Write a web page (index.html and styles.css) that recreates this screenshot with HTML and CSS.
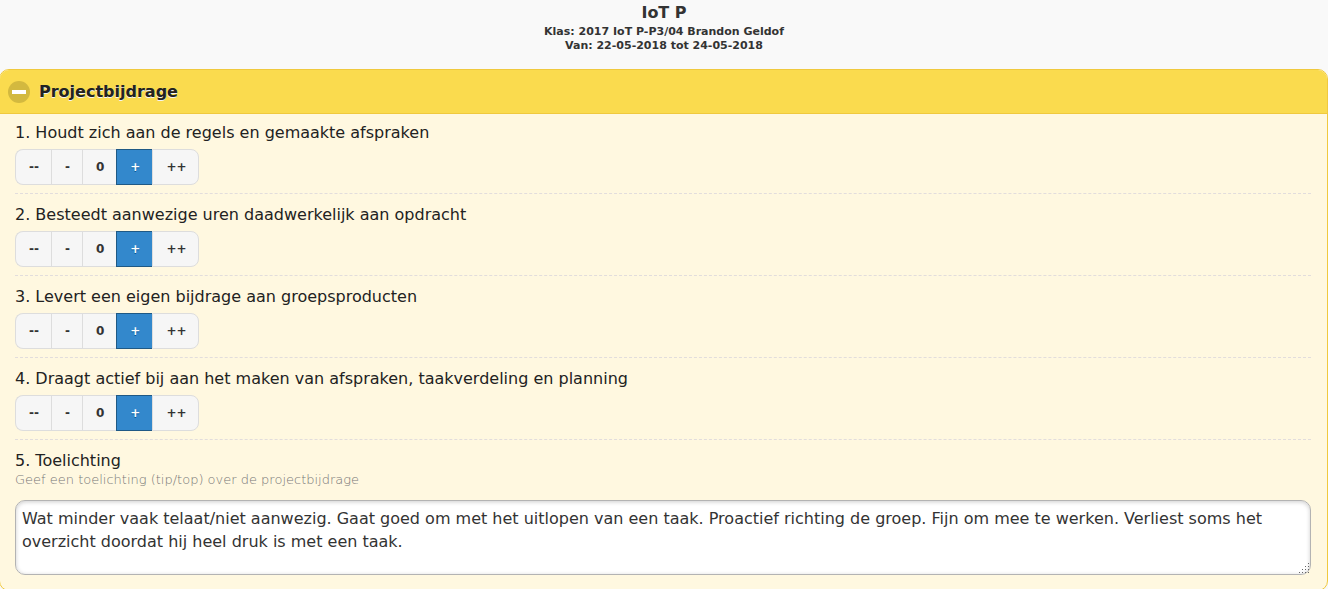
FILE: index.html
```html
<!DOCTYPE html>
<html lang="nl">
<head>
<meta charset="utf-8">
<title>IoT P</title>
<link rel="stylesheet" href="styles.css">
</head>
<body>
<header class="page-header">
  <h1 class="page-title">IoT P</h1>
  <p class="page-meta">Klas: 2017 IoT P-P3/04 Brandon Geldof</p>
  <p class="page-meta">Van: 22-05-2018 tot 24-05-2018</p>
</header>
<main class="panel">
  <h2 class="panel-heading">
    <button class="panel-toggle" type="button" aria-expanded="true">
      <svg class="toggle-icon" viewBox="0 0 22 22" aria-hidden="true"><circle cx="11" cy="11" r="11" fill="#d3b93f"/><rect x="4" y="9" width="14" height="4" fill="#fff"/></svg>
      Projectbijdrage
    </button>
  </h2>
  <form class="panel-body">
    <fieldset class="question">
      <legend class="question-text">1. Houdt zich aan de regels en gemaakte afspraken</legend>
      <div class="scale">
        <label class="option"><input type="radio" name="q1">--</label>
        <label class="option"><input type="radio" name="q1">-</label>
        <label class="option"><input type="radio" name="q1">0</label>
        <label class="option"><input type="radio" name="q1" checked>+</label>
        <label class="option"><input type="radio" name="q1">++</label>
      </div>
    </fieldset>
    <fieldset class="question">
      <legend class="question-text">2. Besteedt aanwezige uren daadwerkelijk aan opdracht</legend>
      <div class="scale">
        <label class="option"><input type="radio" name="q2">--</label>
        <label class="option"><input type="radio" name="q2">-</label>
        <label class="option"><input type="radio" name="q2">0</label>
        <label class="option"><input type="radio" name="q2" checked>+</label>
        <label class="option"><input type="radio" name="q2">++</label>
      </div>
    </fieldset>
    <fieldset class="question">
      <legend class="question-text">3. Levert een eigen bijdrage aan groepsproducten</legend>
      <div class="scale">
        <label class="option"><input type="radio" name="q3">--</label>
        <label class="option"><input type="radio" name="q3">-</label>
        <label class="option"><input type="radio" name="q3">0</label>
        <label class="option"><input type="radio" name="q3" checked>+</label>
        <label class="option"><input type="radio" name="q3">++</label>
      </div>
    </fieldset>
    <fieldset class="question">
      <legend class="question-text">4. Draagt actief bij aan het maken van afspraken, taakverdeling en planning</legend>
      <div class="scale">
        <label class="option"><input type="radio" name="q4">--</label>
        <label class="option"><input type="radio" name="q4">-</label>
        <label class="option"><input type="radio" name="q4">0</label>
        <label class="option"><input type="radio" name="q4" checked>+</label>
        <label class="option"><input type="radio" name="q4">++</label>
      </div>
    </fieldset>
    <div class="question">
      <label class="question-text" for="comment">5. Toelichting</label>
      <p class="hint" id="comment-hint">Geef een toelichting (tip/top) over de projectbijdrage</p>
      <div class="comment-box">
        <textarea class="comment" id="comment" aria-describedby="comment-hint" spellcheck="false">Wat minder vaak telaat/niet aanwezig. Gaat goed om met het uitlopen van een taak. Proactief richting de groep. Fijn om mee te werken. Verliest soms het overzicht doordat hij heel druk is met een taak.</textarea>
        <svg class="grip" viewBox="0 0 11 11" shape-rendering="crispEdges" aria-hidden="true"><path fill="#666" d="M9 0h1v1h-1zM9 3h1v1h-1zM6 3h1v1h-1zM9 6h1v1h-1zM6 6h1v1h-1zM3 6h1v1h-1zM9 9h1v1h-1zM6 9h1v1h-1zM3 9h1v1h-1zM0 9h1v1h-1z"/></svg>
      </div>
    </div>
  </form>
</main>
</body>
</html>
```
FILE: styles.css
```css
* {
  box-sizing: border-box;
}

body {
  margin: 0;
  overflow: hidden;
  background: #f9f9f9;
  color: #222;
  font: 16px/24px "DejaVu Sans", sans-serif;
}

.page-header {
  padding: 1px 0 16px;
  color: #333;
  text-align: center;
  font-weight: bold;
}

.page-title {
  margin: 0;
  font-size: 16px;
  line-height: 24px;
}

.page-meta {
  margin: 0;
  font-size: 11px;
  line-height: 14px;
}

.panel {
  margin-left: -1px;
  border: 1px solid #f0c93e;
  border-radius: 10px;
  background: #fff8e0;
  overflow: hidden;
}

.panel-heading {
  margin: 0;
  border-bottom: 1px solid #f0c93e;
  background: #fadb4e;
}

.panel-toggle {
  display: flex;
  align-items: center;
  gap: 9px;
  width: 100%;
  padding: 10px 8px 9px;
  border: 0;
  background: none;
  color: #222;
  font: bold 16px/24px "DejaVu Sans", sans-serif;
  text-shadow: 0 1px 0 #f3f3f3;
}

.toggle-icon {
  width: 22px;
  height: 22px;
}

.panel-body {
  padding: 0 16px 15px 15px;
}

.question {
  margin: 0;
  padding: 0 0 8px;
  border: 0;
  border-bottom: 1px dashed #e2dddc;
}

.question:last-child {
  padding-bottom: 0;
  border-bottom: 0;
}

.question-text {
  display: block;
  padding: 10px 0 0;
  line-height: 22px;
}

.question:first-child .question-text {
  padding-top: 8px;
}

.scale {
  display: flex;
  width: max-content;
  margin-top: 5px;
}

.option {
  padding: 0 12px 0 13px;
  border: 1px solid #ddd;
  border-right-width: 0;
  background: #f6f6f6;
  color: #333;
  font-size: 12px;
  font-weight: bold;
  line-height: 34px;
  text-shadow: 0 1px 0 #f3f3f3;
}

.option:first-child {
  border-radius: 8px 0 0 8px;
}

.option:last-child {
  border-right-width: 1px;
  border-radius: 0 8px 8px 0;
}

.option:has(:checked) {
  border-color: #1f5985;
  background: #3388cc;
  color: #fff;
  text-shadow: 0 1px 0 #005599;
}

.option input {
  position: absolute;
  margin: 0;
  opacity: 0;
}

.hint {
  margin: 0 0 12px;
  color: #777;
  font-size: 13px;
  font-weight: 200;
  line-height: 16px;
}

.comment-box {
  position: relative;
}

.comment {
  display: block;
  width: 100%;
  height: 75px;
  padding: 6px;
  border: 1px solid #b3b3b3;
  border-radius: 10px;
  background: #fff;
  color: #333;
  box-shadow: inset 0 1px 4px rgba(0, 0, 0, 0.2);
  font: 16px/23px "DejaVu Sans", sans-serif;
  resize: none;
}

.grip {
  position: absolute;
  right: 1px;
  bottom: 1px;
  width: 11px;
  height: 11px;
}
```
